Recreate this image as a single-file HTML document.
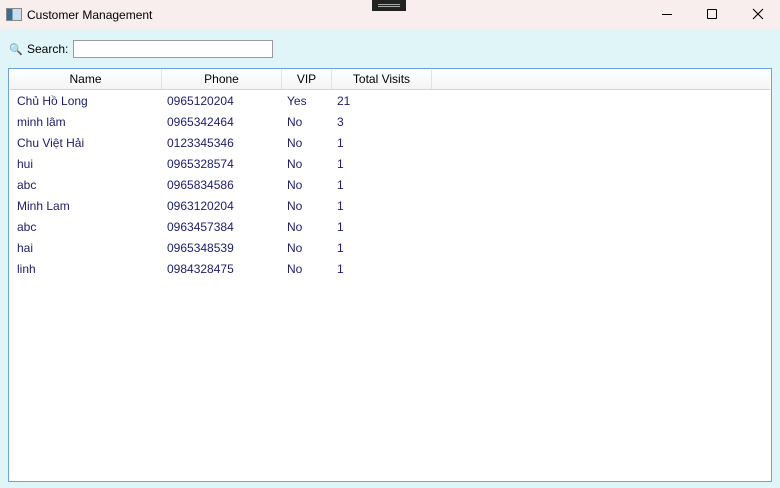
<!DOCTYPE html>
<html><head><style>
body{margin:0;width:780px;height:488px;background:#dff5f8;font-family:"Liberation Sans","Noto Sans CJK SC",sans-serif;font-size:12px;position:relative;overflow:hidden;color:#000}
.tb{position:absolute;left:0;top:0;width:780px;height:29px;background:#f8eeed}
.abs{position:absolute}
.list{position:absolute;left:8px;top:68px;width:762px;height:412px;background:#fff;border:1px solid #6fa3d6}
.hdr{position:absolute;left:1px;top:1px;width:760px;height:19px;background:linear-gradient(#fff,#f4f4f4);border-bottom:1px solid #d5d5d5}
.hc{position:absolute;top:0;height:19px;line-height:19px;text-align:center;border-right:1px solid #e2e2e2;color:#000}
.r{position:absolute;left:0;height:21px;line-height:21px;color:#1c1c6a}
.r span{position:absolute;white-space:nowrap}
</style></head><body>
<div class="tb">
 <div class="abs" style="left:6px;top:8px;width:14px;height:11px;border:1px solid #888;background:linear-gradient(90deg,#3a6c8c 0 40%,#cde 40%)"></div>
 <div class="abs" style="left:27px;top:8px;font-size:12px;color:#000">Customer Management</div>
 <div class="abs" style="left:372px;top:0;width:34px;height:11px;background:#222"><div style="margin:4px 6px;height:1px;border-top:1px solid #aaa;border-bottom:1px solid #aaa"></div></div>
 <div class="abs" style="left:662px;top:14px;width:10px;height:1px;background:#000"></div>
 <div class="abs" style="left:707px;top:9px;width:8px;height:8px;border:1px solid #000;border-radius:1px"></div>
 <svg class="abs" style="left:752px;top:8px" width="12" height="12"><path d="M1 1L11 11M11 1L1 11" stroke="#000" stroke-width="1.1"/></svg>
</div>
<div class="abs" style="left:9px;top:43px;font-size:11px">🔍</div>
<div class="abs" style="left:27px;top:42px">Search:</div>
<div class="abs" style="left:73px;top:40px;width:198px;height:16px;border:1px solid #9a9a9a;background:#fff"></div>
<div class="list">
 <div class="hdr">
  <div class="hc" style="left:0;width:151px">Name</div>
  <div class="hc" style="left:152px;width:119px">Phone</div>
  <div class="hc" style="left:272px;width:49px">VIP</div>
  <div class="hc" style="left:322px;width:99px">Total Visits</div>
 </div>
 <div style="position:absolute;left:0;top:22px;width:760px">
  <div class="r" style="top:0"><span style="left:8px">Chủ Hồ Long</span><span style="left:158px">0965120204</span><span style="left:278px">Yes</span><span style="left:328px">21</span></div>
  <div class="r" style="top:21px"><span style="left:8px">minh lâm</span><span style="left:158px">0965342464</span><span style="left:278px">No</span><span style="left:328px">3</span></div>
  <div class="r" style="top:42px"><span style="left:8px">Chu Việt Hải</span><span style="left:158px">0123345346</span><span style="left:278px">No</span><span style="left:328px">1</span></div>
  <div class="r" style="top:63px"><span style="left:8px">hui</span><span style="left:158px">0965328574</span><span style="left:278px">No</span><span style="left:328px">1</span></div>
  <div class="r" style="top:84px"><span style="left:8px">abc</span><span style="left:158px">0965834586</span><span style="left:278px">No</span><span style="left:328px">1</span></div>
  <div class="r" style="top:105px"><span style="left:8px">Minh Lam</span><span style="left:158px">0963120204</span><span style="left:278px">No</span><span style="left:328px">1</span></div>
  <div class="r" style="top:126px"><span style="left:8px">abc</span><span style="left:158px">0963457384</span><span style="left:278px">No</span><span style="left:328px">1</span></div>
  <div class="r" style="top:147px"><span style="left:8px">hai</span><span style="left:158px">0965348539</span><span style="left:278px">No</span><span style="left:328px">1</span></div>
  <div class="r" style="top:168px"><span style="left:8px">linh</span><span style="left:158px">0984328475</span><span style="left:278px">No</span><span style="left:328px">1</span></div>
 </div>
</div>
</body></html>
